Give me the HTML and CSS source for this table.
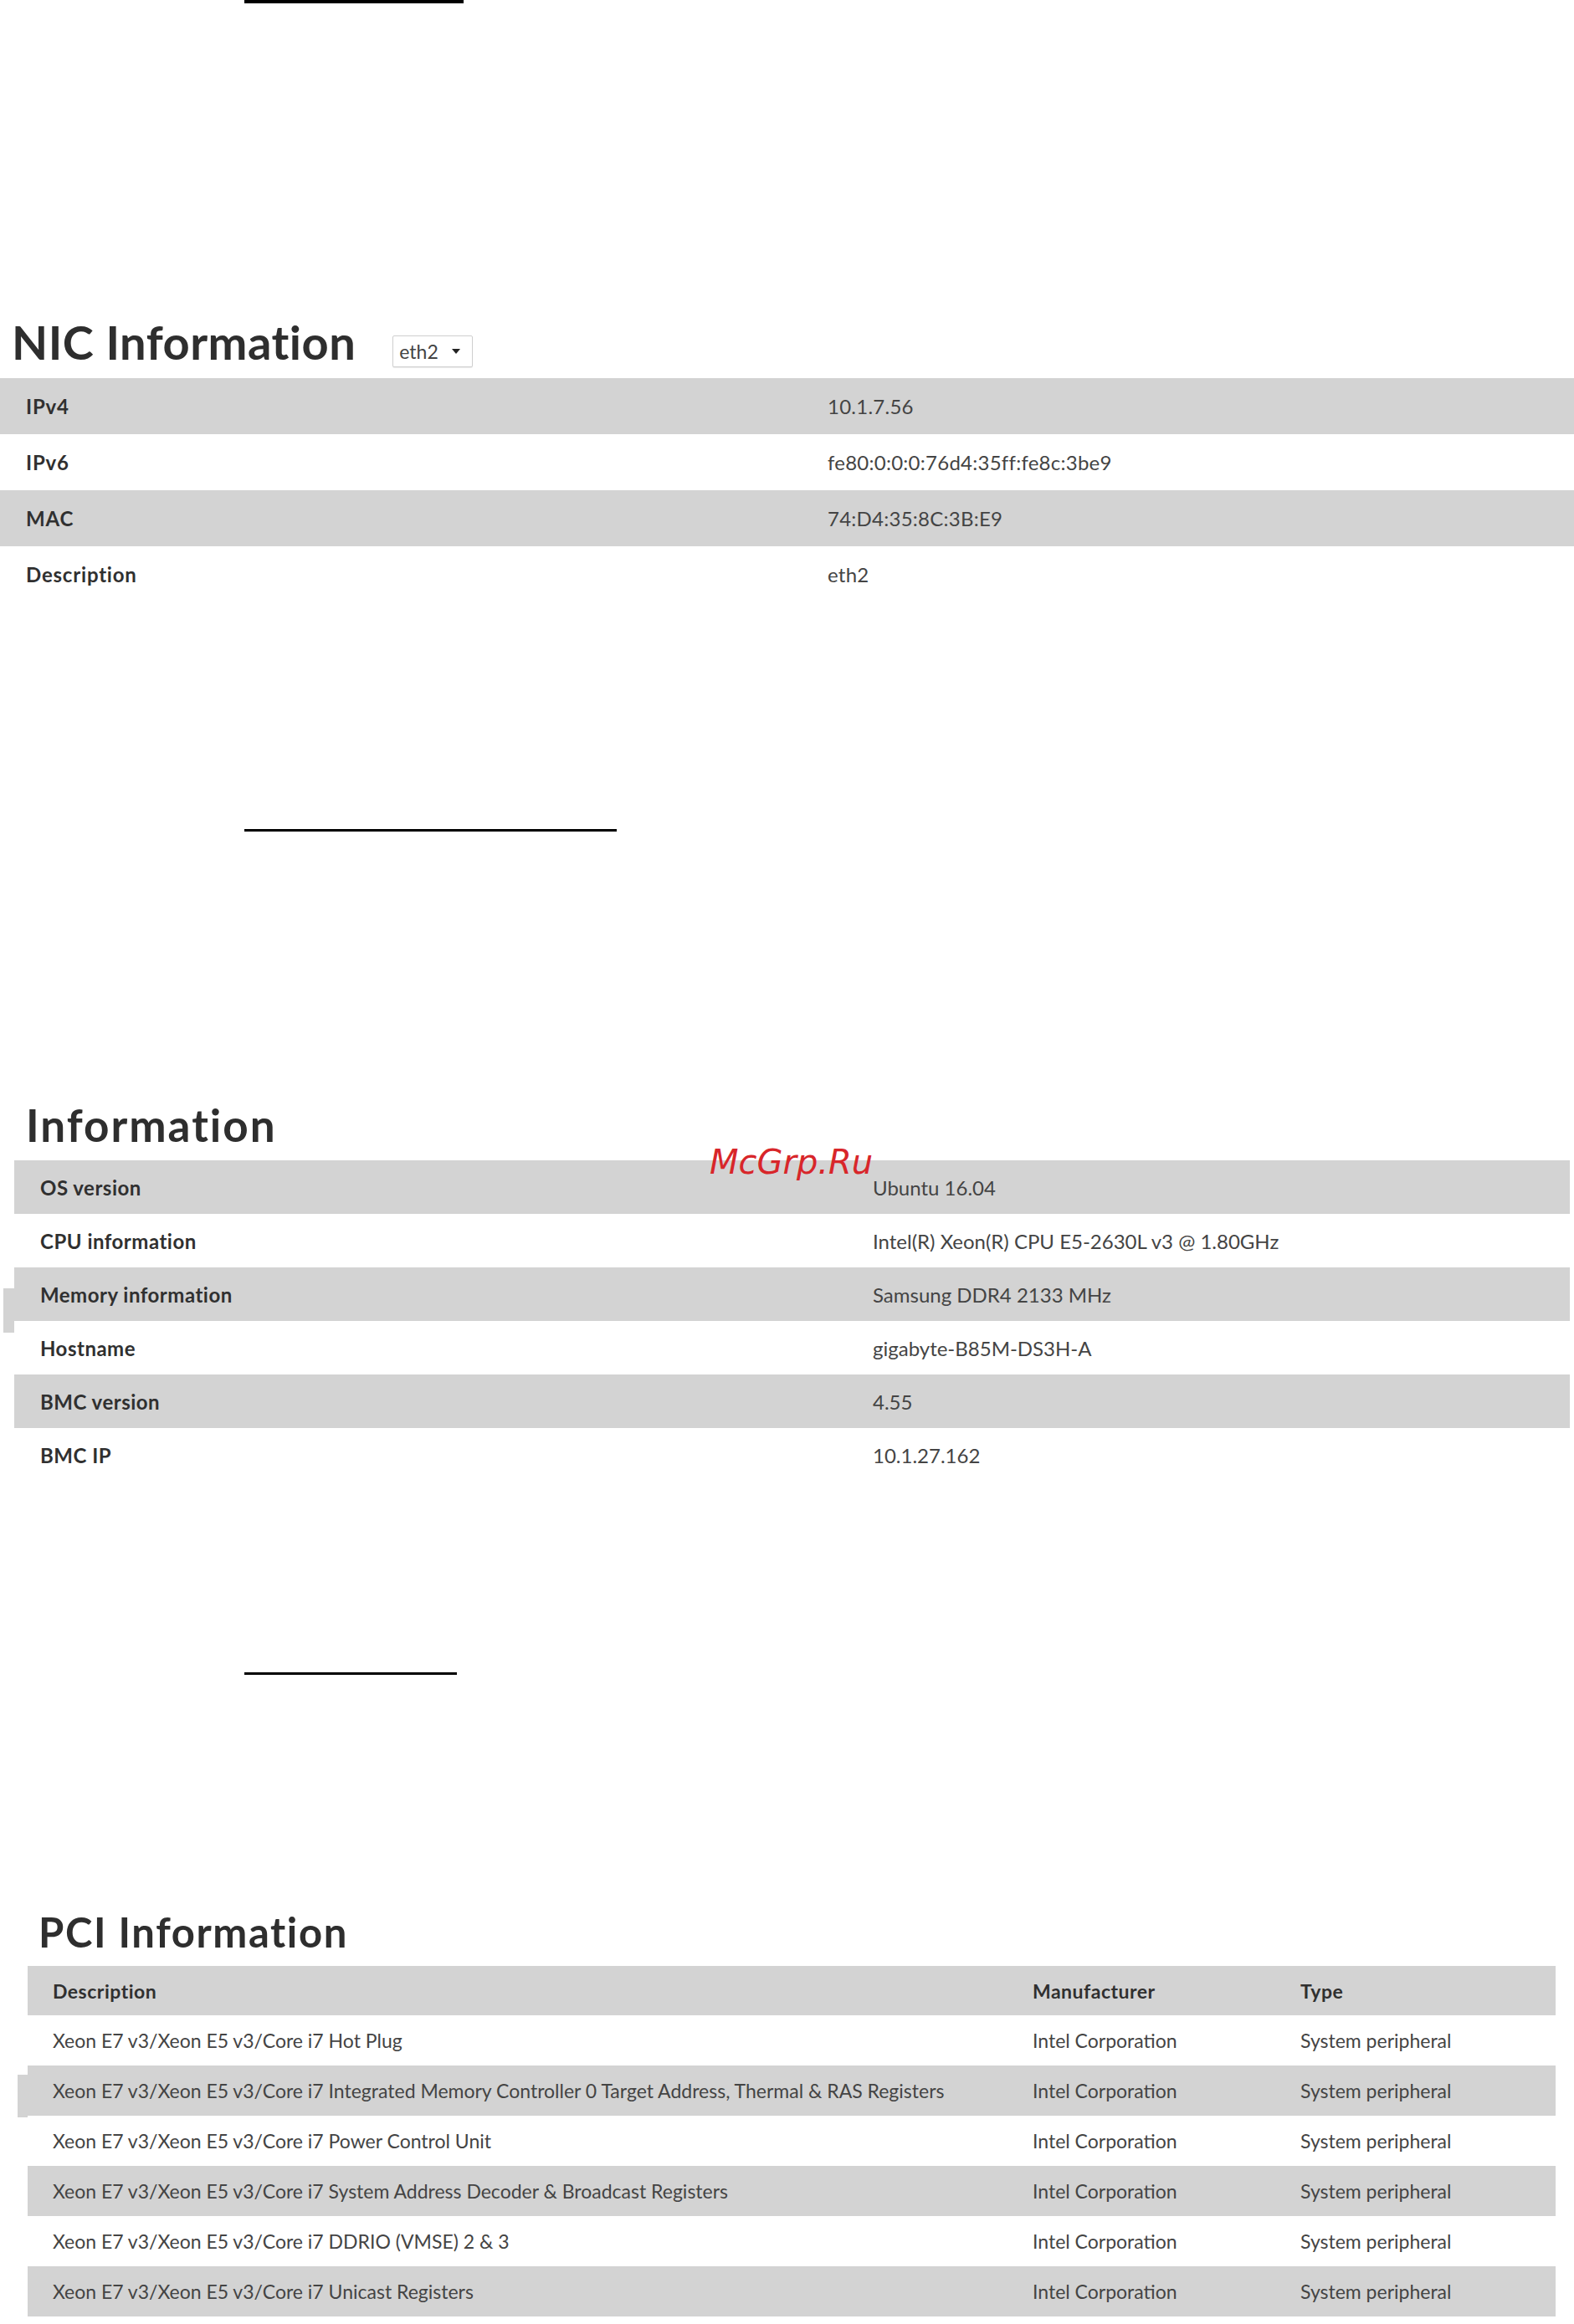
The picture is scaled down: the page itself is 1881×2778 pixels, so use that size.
FILE: index.html
```html
<!DOCTYPE html>
<html lang="en">
<head>
<meta charset="utf-8">
<title>System Information</title>
<link rel="stylesheet" href="styles.css">
</head>
<body>
<div class="rule rule-1"></div>

<section class="nic">
  <div class="nic-head">
    <h2 class="title title-nic">NIC Information</h2>
    <div class="select"><span class="select-text">eth2</span><span class="caret"></span></div>
  </div>
  <div class="kv kv-nic">
    <div class="row gray"><div class="k">IPv4</div><div class="v">10.1.7.56</div></div>
    <div class="row"><div class="k">IPv6</div><div class="v">fe80:0:0:0:76d4:35ff:fe8c:3be9</div></div>
    <div class="row gray"><div class="k">MAC</div><div class="v">74:D4:35:8C:3B:E9</div></div>
    <div class="row"><div class="k">Description</div><div class="v">eth2</div></div>
  </div>
</section>

<div class="rule rule-2"></div>

<section class="info">
  <h2 class="title title-info">Information</h2>
  <div class="watermark">McGrp.Ru</div>
  <div class="kv kv-info">
    <div class="row gray"><div class="k">OS version</div><div class="v">Ubuntu 16.04</div></div>
    <div class="row"><div class="k">CPU information</div><div class="v">Intel(R) Xeon(R) CPU E5-2630L v3 @ 1.80GHz</div></div>
    <div class="row gray mark-info"><div class="k">Memory information</div><div class="v">Samsung DDR4 2133 MHz</div></div>
    <div class="row"><div class="k">Hostname</div><div class="v">gigabyte-B85M-DS3H-A</div></div>
    <div class="row gray"><div class="k">BMC version</div><div class="v">4.55</div></div>
    <div class="row"><div class="k">BMC IP</div><div class="v">10.1.27.162</div></div>
  </div>
</section>

<div class="rule rule-3"></div>

<section class="pci">
  <h2 class="title title-pci">PCI Information</h2>
  <div class="pci-table">
    <div class="prow gray head"><div>Description</div><div>Manufacturer</div><div>Type</div></div>
    <div class="prow"><div>Xeon E7 v3/Xeon E5 v3/Core i7 Hot Plug</div><div>Intel Corporation</div><div>System peripheral</div></div>
    <div class="prow gray mark-pci"><div>Xeon E7 v3/Xeon E5 v3/Core i7 Integrated Memory Controller 0 Target Address, Thermal &amp; RAS Registers</div><div>Intel Corporation</div><div>System peripheral</div></div>
    <div class="prow"><div>Xeon E7 v3/Xeon E5 v3/Core i7 Power Control Unit</div><div>Intel Corporation</div><div>System peripheral</div></div>
    <div class="prow gray"><div>Xeon E7 v3/Xeon E5 v3/Core i7 System Address Decoder &amp; Broadcast Registers</div><div>Intel Corporation</div><div>System peripheral</div></div>
    <div class="prow"><div>Xeon E7 v3/Xeon E5 v3/Core i7 DDRIO (VMSE) 2 &amp; 3</div><div>Intel Corporation</div><div>System peripheral</div></div>
    <div class="prow gray"><div>Xeon E7 v3/Xeon E5 v3/Core i7 Unicast Registers</div><div>Intel Corporation</div><div>System peripheral</div></div>
  </div>
</section>
</body>
</html>
```

FILE: styles.css
```css
* { box-sizing: border-box; }
html, body { margin: 0; padding: 0; background: #fff; }
body {
  font-family: Lato, "Open Sans", "DejaVu Sans", sans-serif;
  color: #333;
  width: 1881px;
  min-height: 2778px;
  overflow: hidden;
}

.rule { height: 3px; background: #000; margin-left: 292px; }
.rule-1 { width: 262px; height: 4px; }
.rule-2 { width: 445px; margin-top: 271px; }
.rule-3 { width: 254px; margin-top: 228px; }

.title {
  margin: 0;
  font-weight: 700;
  color: #2e2e2e;
}

/* NIC */
.nic { margin-top: 371px; }
.nic-head { display: flex; align-items: flex-start; height: 67px; padding-left: 14px; }
.title-nic { font-size: 56px; line-height: 67px; letter-spacing: 0.5px; }
.select {
  margin-left: 44px;
  margin-top: 26px;
  width: 96px;
  height: 38px;
  border: 1px solid #cfcfcf;
  border-radius: 2px;
  box-shadow: 0 1px 1px rgba(0,0,0,0.08);
  display: flex;
  align-items: center;
  padding-left: 7px;
  background: #fff;
}
.select-text { font-size: 23px; color: #444; }
.caret {
  margin-left: 16px;
  width: 0; height: 0;
  border-left: 5px solid transparent;
  border-right: 5px solid transparent;
  border-top: 6px solid #222;
}

.kv .row { display: grid; align-items: center; }
.gray { background: #d3d3d3; }
.k { font-weight: 700; color: #303030; letter-spacing: 0.8px; }
.v { color: #444; }

.kv-nic { margin-top: 10px; }
.kv-nic .row { grid-template-columns: 958px 1fr; height: 67px; padding-left: 31px; font-size: 24px; }
.kv-nic .v { letter-spacing: 0.25px; }

/* Info */
.info { position: relative; margin-top: 319px; }
.title-info { font-size: 53px; line-height: 64px; padding-left: 31px; letter-spacing: 2px; }
.kv-info { margin: 10px 5px 0 17px; }
.kv-info .row { grid-template-columns: 995px 1fr; height: 64px; padding-left: 31px; font-size: 24px; position: relative; }
.kv-info .k { letter-spacing: 0.5px; }

.watermark {
  position: absolute;
  left: 848px;
  top: 53px;
  font-family: "DejaVu Sans", Verdana, sans-serif;
  font-style: oblique;
  font-size: 40px;
  line-height: 1.164;
  color: #d8262a;
  z-index: 2;
}

.mark-info::before {
  content: "";
  position: absolute;
  left: -13px;
  top: 25px;
  width: 13px;
  height: 53px;
  background: #d3d3d3;
}

/* PCI */
.pci { margin-top: 278px; }
.title-pci { font-size: 49px; line-height: 59px; padding-left: 46px; letter-spacing: 1.6px; }
.pci-table { margin: 11px 22px 0 33px; }
.prow {
  display: grid;
  grid-template-columns: 1171px 320px 1fr;
  align-items: center;
  height: 60px;
  padding-left: 30px;
  font-size: 23px;
  color: #444;
  position: relative;
}
.prow.head { height: 59px; font-weight: 700; color: #303030; letter-spacing: 0.5px; }
.mark-pci::before {
  content: "";
  position: absolute;
  left: -12px;
  top: 11px;
  width: 12px;
  height: 51px;
  background: #d3d3d3;
}
```
